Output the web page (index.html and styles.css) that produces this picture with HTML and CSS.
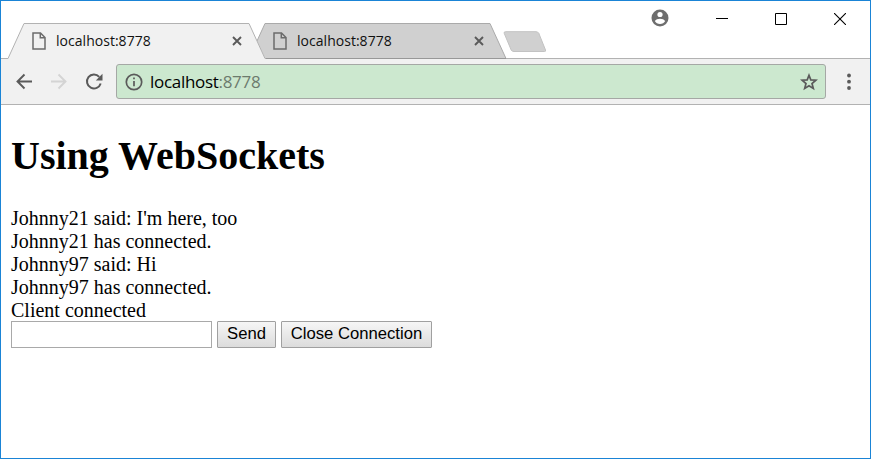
FILE: index.html
```html
<!DOCTYPE html>
<html lang="en">
<head>
<meta charset="utf-8">
<title>localhost:8778</title>
<link rel="stylesheet" href="styles.css">
</head>
<body>
<div class="window">
  <header class="titlebar">
    <div class="tabs">
      <div class="tab tab-active">
        <svg class="tab-shape" width="258" height="36" viewBox="0 0 258 36"><path d="M0 36V35.500L16 .5H241L257.500 36z" fill="#f1f1f1"/><path d="M0 35.500 16 .5H241L257 35.500" fill="none" stroke="#b2b2b2"/></svg>
        <svg class="doc" width="14" height="18" viewBox="0 0 14 18"><path d="M1 1H8.500L13 5.500V17H1zM8.300 1V5.800H13" fill="none" stroke="#6b6b6b" stroke-width="1.500"/></svg>
        <span class="tab-title">localhost:8778</span>
        <svg class="tab-close" width="10" height="10" viewBox="0 0 10 10"><path d="M1 1 9 9M9 1 1 9" stroke="#5a5a5a" stroke-width="1.900"/></svg>
      </div>
      <div class="tab tab-back">
        <svg class="tab-shape" width="258" height="36" viewBox="0 0 258 36"><path d="M0 35.500 16 .5H241L257 35.500z" fill="#d0d0d0" stroke="#aaa"/><path d="M14 35.500H257" stroke="#989898"/></svg>
        <svg class="doc" width="14" height="18" viewBox="0 0 14 18"><path d="M1 1H8.500L13 5.500V17H1zM8.300 1V5.800H13" fill="none" stroke="#6b6b6b" stroke-width="1.500"/></svg>
        <span class="tab-title">localhost:8778</span>
        <svg class="tab-close" width="10" height="10" viewBox="0 0 10 10"><path d="M1 1 9 9M9 1 1 9" stroke="#5a5a5a" stroke-width="1.900"/></svg>
      </div>
      <svg class="new-tab" width="44" height="22" viewBox="0 0 44 22"><path d="M2.500.7H33Q35 .7 35.800 2.300L42.500 19Q43 20.500 41.500 20.500H11Q9 20.500 8.200 19L1.200 2.300Q.7.7 2.500.7z" fill="#d0d0d0" stroke="#c2c2c2"/></svg>
    </div>
    <div class="controls">
      <svg class="profile" width="18" height="18" viewBox="0 0 18 18"><circle cx="9" cy="9" r="8.500" fill="#6e6e6e"/><circle cx="9" cy="5.500" r="2.600" fill="#fff"/><path d="M3.800 12Q5.300 9.800 9 9.800T14.200 12Q12.500 15 9 15T3.800 12z" fill="#fff"/></svg>
      <svg width="12" height="12" viewBox="0 0 12 12"><path d="M0 5.500H12" stroke="#000"/></svg>
      <svg width="12" height="12" viewBox="0 0 12 12"><path d="M.5.5H11.500V11.500H.5z" fill="none" stroke="#000"/></svg>
      <svg width="12" height="12" viewBox="0 0 12 12"><path d="M0 0 12 12M12 0 0 12" stroke="#000" stroke-width="1.100"/></svg>
    </div>
  </header>
  <nav class="toolbar">
    <svg width="18" height="18" viewBox="0 0 18 18"><path d="M17 8.500H3M9.500 1.500 2.500 8.500 9.500 15.500" fill="none" stroke="#5a5a5a" stroke-width="1.900"/></svg>
    <svg width="18" height="18" viewBox="0 0 18 18"><path d="M1 8.500H15M8.500 1.500 15.500 8.500 8.500 15.500" fill="none" stroke="#d4d4d4" stroke-width="1.900"/></svg>
    <svg width="18" height="18" viewBox="0 0 18 18"><path d="M14.200 3.800A7 7 0 1 0 15.700 10.500" fill="none" stroke="#5a5a5a" stroke-width="2"/><path d="M17.500 .8V7.500H10.800z" fill="#5a5a5a"/></svg>
    <div class="address">
      <svg width="18" height="18" viewBox="0 0 18 18"><circle cx="9" cy="9" r="7.700" fill="none" stroke="#5a5a5a" stroke-width="1.700"/><path d="M9 4.500V6.300M9 7.900V13.300" stroke="#5a5a5a" stroke-width="1.700"/></svg>
      <span class="url">localhost<span class="port">:8778</span></span>
      <svg class="star" width="18" height="18" viewBox="0 0 18 18"><path d="M9 2.300 10.800 6.900 15.900 7.200 12 10.500 13.300 15.400 9 12.700 4.700 15.400 6 10.500 2.100 7.200 7.200 6.900z" fill="none" stroke="#5a5a5a" stroke-width="1.700"/></svg>
    </div>
    <svg class="menu" width="4" height="18" viewBox="0 0 4 18"><g fill="#5a5a5a"><circle cx="2" cy="2.500" r="1.900"/><circle cx="2" cy="8.700" r="1.900"/><circle cx="2" cy="15" r="1.900"/></g></svg>
  </nav>
  <main class="page">
    <h1>Using WebSockets</h1>
    <div class="log">
      <div>Johnny21 said: I'm here, too</div>
      <div>Johnny21 has connected.</div>
      <div>Johnny97 said: Hi</div>
      <div>Johnny97 has connected.</div>
      <div>Client connected</div>
    </div>
    <div class="form">
      <input class="message" type="text">
      <button class="send">Send</button>
      <button class="close">Close Connection</button>
    </div>
  </main>
</div>
</body>
</html>
```
FILE: styles.css
```css
* { box-sizing: border-box; }
html, body { margin: 0; height: 100%; }
body { background: #fff; overflow: hidden; }
svg { display: block; flex: none; }
.window { height: 459px; border: 1px solid #1a84d6; background: #fff; }
.titlebar {
  height: 58px; display: flex; justify-content: space-between;
  background: linear-gradient(#b2b2b2, #b2b2b2) 0 100% / 100% 1px no-repeat;
}
.tabs { display: flex; padding: 22px 0 0 7px; font-family: "Open Sans", sans-serif; }
.tab {
  position: relative; width: 258px; height: 36px; display: flex; align-items: center;
  padding: 0 24px 0 24px;
}
.tab-shape { position: absolute; left: 0; top: 0; z-index: -1; }
.tab-active { z-index: 2; }
.tab-back { z-index: 1; margin-left: -17px; padding-right: 23px; }
.tab-title { margin-left: 10px; flex: 1; font-size: 14px; line-height: 20px; color: #111; letter-spacing: .03px; }
.new-tab { margin: 8px 0 0 -4px; }
.controls { display: flex; align-items: center; height: 36px; padding-right: 24px; gap: 47px; }
.profile { margin: -2px 0 0; }
.toolbar {
  height: 46px; display: flex; align-items: center; padding: 0 19px 0 14px;
  background: #f1f1f1; border-bottom: 1px solid #b2b2b2; gap: 17px;
}
.address {
  flex: 1; height: 35px; display: flex; align-items: center; margin: 0 4px 0 -4px;
  padding: 0 7px 0 8px; background: #cce8cf; border: 1px solid #a5a8a5; border-radius: 3px;
}
.url { flex: 1; margin-left: 7px; font: 17px/24px "Open Sans", sans-serif; letter-spacing: -.3px; color: #000; }
.port { color: #6c7b6d; }
.page { padding: 0 10px; font: 20px/23px "Liberation Serif", serif; color: #000; }
h1 { margin: 28px 0 28px; font-size: 40px; line-height: 46px; font-weight: bold; }
.form { display: flex; gap: 5px; margin-top: -1px; }
.message { width: 201px; height: 27px; margin: 0; border: 1px solid #a9a9a9; padding: 1px; background: #fff; }
button {
  height: 27px; margin: 0; padding: 0 0 2px; border: 1px solid #a0a0a0; border-radius: 1px;
  background: linear-gradient(#f6f6f6, #dcdcdc); font: 16.667px/20px "Liberation Sans", sans-serif; color: #000;
}
.send { width: 59px; }
.close { width: 151px; }
```
